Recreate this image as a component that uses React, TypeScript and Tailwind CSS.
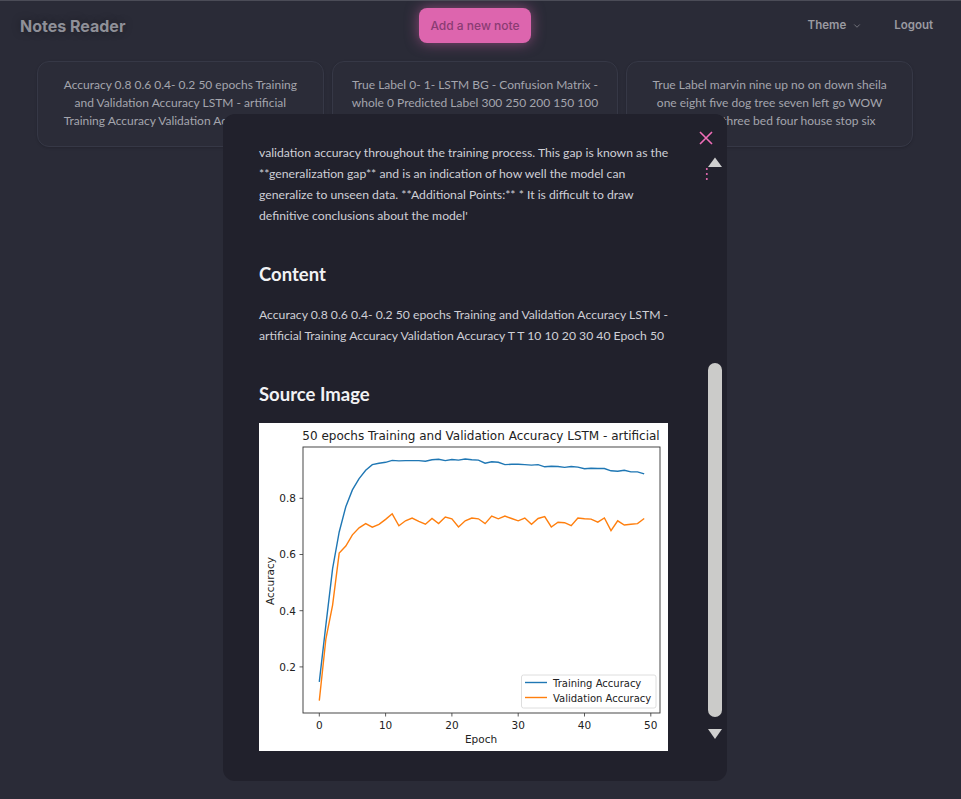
import { ChevronDown } from 'lucide-react';

const training = [
  0.147, 0.35, 0.55, 0.68, 0.77, 0.83, 0.87, 0.9, 0.92, 0.925, 0.928, 0.935, 0.933, 0.934, 0.934, 0.934, 0.932,
  0.937, 0.939, 0.934, 0.938, 0.936, 0.94, 0.937, 0.936, 0.925, 0.93, 0.928, 0.92, 0.921, 0.921, 0.92, 0.918,
  0.92, 0.912, 0.914, 0.913, 0.91, 0.913, 0.911, 0.905, 0.907, 0.906, 0.906, 0.898, 0.896, 0.9, 0.894, 0.894,
  0.887,
];
const validation = [
  0.08, 0.3, 0.42, 0.605, 0.63, 0.67, 0.695, 0.71, 0.697, 0.707, 0.725, 0.745, 0.702, 0.72, 0.73, 0.718, 0.708,
  0.728, 0.71, 0.733, 0.727, 0.698, 0.72, 0.73, 0.727, 0.71, 0.737, 0.727, 0.737, 0.728, 0.72, 0.73, 0.708,
  0.728, 0.735, 0.698, 0.715, 0.713, 0.703, 0.73, 0.727, 0.726, 0.715, 0.73, 0.685, 0.72, 0.705, 0.708, 0.71,
  0.728,
];

const xs = (e: number) => 60.3 + 6.63 * e;
const ys = (v: number) => 75.3 + (0.8 - v) * 281;
const line = (d: number[]) => d.map((v, i) => `${i ? 'L' : 'M'}${xs(i).toFixed(1)},${ys(v).toFixed(1)}`).join(' ');

// note previews, three lines each
const cards = [
  'Accuracy 0.8 0.6 0.4- 0.2 50 epochs Training and Validation Accuracy LSTM - artificial Training Accuracy Validation Accuracy T T 10',
  'True Label 0- 1- LSTM BG - Confusion Matrix - whole 0 Predicted Label 300 250 200 150 100 50 0 1 Predicted Label',
  'True Label marvin nine up no on down sheila one eight five dog tree seven left go WOW happy bird three bed four house stop six',
];

function Chart() {
  const tick = { fontSize: 10.5, fill: '#222', fontFamily: '"DejaVu Sans", sans-serif' };
  return (
    <svg width="409" height="328" viewBox="0 0 409 328" className="block bg-white">
      <text x="222" y="17" textAnchor="middle" style={{ ...tick, fontSize: 12 }}>
        50 epochs Training and Validation Accuracy LSTM - artificial
      </text>
      <path d={line(training)} fill="none" stroke="#1f77b4" strokeWidth="1.4" />
      <path d={line(validation)} fill="none" stroke="#ff7f0e" strokeWidth="1.4" />
      <rect x="44" y="24" width="357" height="266" fill="none" stroke="#333" strokeWidth="0.9" />
      {[0.2, 0.4, 0.6, 0.8].map((v) => (
        <g key={v}>
          <line x1="40.5" x2="44" y1={ys(v)} y2={ys(v)} stroke="#333" strokeWidth="0.8" />
          <text x="37" y={ys(v) + 3.8} textAnchor="end" style={tick}>
            {v.toFixed(1)}
          </text>
        </g>
      ))}
      {[0, 10, 20, 30, 40, 50].map((e) => (
        <g key={e}>
          <line x1={xs(e)} x2={xs(e)} y1="290" y2="293.5" stroke="#333" strokeWidth="0.8" />
          <text x={xs(e)} y="306" textAnchor="middle" style={tick}>
            {e}
          </text>
        </g>
      ))}
      <text x="222" y="320" textAnchor="middle" style={tick}>
        Epoch
      </text>
      <text x="0" y="0" textAnchor="middle" transform="translate(14.5 158) rotate(-90)" style={tick}>
        Accuracy
      </text>
      <rect x="262.5" y="252" width="134.5" height="33" rx="2" fill="#fff" fillOpacity="0.85" stroke="#d6d6d6" strokeWidth="0.8" />
      <line x1="266" x2="288" y1="259.5" y2="259.5" stroke="#1f77b4" strokeWidth="1.4" />
      <line x1="266" x2="288" y1="274.5" y2="274.5" stroke="#ff7f0e" strokeWidth="1.4" />
      <text x="294" y="263.5" style={{ ...tick, fontSize: 10 }}>
        Training Accuracy
      </text>
      <text x="294" y="278.5" style={{ ...tick, fontSize: 10 }}>
        Validation Accuracy
      </text>
    </svg>
  );
}

export default function App() {
  return (
    <div className="relative min-h-[799px] bg-[#2a2b37] border-t border-[#4b4c57] overflow-hidden">
      {/* navbar */}
      <nav className="flex items-center h-[49px] font-['Inter',sans-serif]">
        <div className="w-[419px] pl-5">
          <span className="text-[16px] font-bold text-[#8f9098] [text-shadow:0_0_8px_rgba(0,0,0,0.35)]">Notes Reader</span>
        </div>
        <button className="h-[35px] w-[112px] rounded-lg bg-[#dd65ae] text-[12px] font-medium text-[#8a3c73] shadow-[0_0_14px_rgba(221,101,174,0.55)]">
          Add a new note
        </button>
        <div className="ml-auto flex items-center pr-7 text-[11.5px] font-semibold text-[#9a9aa1]">
          <span className="flex items-center gap-[6px]">
            Theme
            <ChevronDown size={10} strokeWidth={1.5} />
          </span>
          <span className="ml-[32px]">Logout</span>
        </div>
      </nav>

      {/* notes */}
      <div className="mt-[11px] ml-[37px] w-[876px] grid grid-cols-3 gap-2 font-['Lato',sans-serif]">
        {cards.map((c, i) => (
          <div key={i} className="rounded-xl border border-[#363846] bg-[#2b2c38] px-[18px] pt-[14px] pb-4 shadow-sm">
            <p className="line-clamp-3 text-center text-[12px] leading-[18px] text-[#a4a5ad]">{c}</p>
          </div>
        ))}
      </div>

      {/* modal */}
      <div className="absolute left-[223px] top-[113px] w-[504px] h-[667px] rounded-xl bg-[#21212c] overflow-hidden font-['Lato',sans-serif]">
        <div className="pl-9 pr-[56px] pt-[28px]">
          <p className="text-[12.2px] leading-[21px] text-[#cfcfd6]">
            validation accuracy throughout the training process. This gap is known as the **generalization gap** and is an
            indication of how well the model can generalize to unseen data. **Additional Points:** * It is difficult to
            draw definitive conclusions about the model'
          </p>
          <h3 className="mt-[34px] text-[18.5px] leading-[28px] font-bold text-[#f2f2f4]">Content</h3>
          <p className="mt-[16px] text-[12.2px] leading-[21px] text-[#cfcfd6]">
            Accuracy 0.8 0.6 0.4- 0.2 50 epochs Training and Validation Accuracy LSTM - artificial Training Accuracy
            Validation Accuracy T T 10 10 20 30 40 Epoch 50
          </p>
          <h3 className="mt-[34px] text-[18.5px] leading-[28px] font-bold text-[#f2f2f4]">Source Image</h3>
          <div className="mt-[15px]">
            <Chart />
          </div>
        </div>

        {/* close + scrollbar overlay */}
        <svg className="absolute left-[476px] top-[17px]" width="14" height="14" viewBox="0 0 14 14">
          <path d="M1 1 L13 13 M13 1 L1 13" stroke="#f06db8" strokeWidth="1.6" />
        </svg>
        <svg className="absolute left-[482px] top-[42px]" width="20" height="26" viewBox="0 0 20 26">
          <path d="M3 11 L10 1.5 L17 11 Z" fill="#cfcfcf" />
          <circle cx="1.8" cy="13" r="1" fill="#f06db8" />
          <circle cx="1.8" cy="18" r="1" fill="#f06db8" />
          <circle cx="1.8" cy="23" r="1" fill="#f06db8" />
        </svg>
        <div className="absolute left-[485px] top-[249px] w-[14px] h-[354px] rounded-full bg-[#cbcbc9]" />
        <svg className="absolute left-[484px] top-[614px]" width="16" height="12" viewBox="0 0 16 12">
          <path d="M1 1 L15 1 L8 11 Z" fill="#cfcfcf" />
        </svg>
      </div>
    </div>
  );
}
